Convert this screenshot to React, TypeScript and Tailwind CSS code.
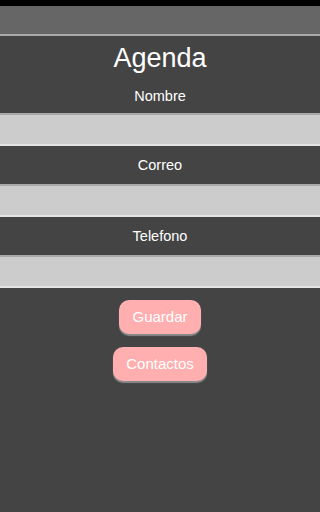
export default function App() {
  const fields = ["Nombre", "Correo", "Telefono"];

  return (
    <div className="min-h-screen bg-[#444444] font-['Liberation_Sans',Arial,sans-serif] text-white">
      <div className="h-[6px] bg-black" />
      <div className="h-[30px] border-b-2 border-[#aaaaaa] bg-[#666666]" />

      <h1 className="mt-[6px] text-center text-[27px] leading-[32px]">Agenda</h1>

      <form className="flex flex-col" onSubmit={(e) => e.preventDefault()}>
        {fields.map((label, i) => (
          <div key={label} className="flex flex-col">
            <label
              className={`text-center text-[14.5px] leading-[20px] ${
                i === 0 ? "mt-[12px] mb-[7px]" : "my-[9px]"
              }`}
            >
              {label}
            </label>
            <input
              type="text"
              className="h-[33px] w-full border-y-2 border-t-[#a8a8a8] border-b-[#e4e4e4] bg-[#cccccc] px-2 text-black outline-none"
            />
          </div>
        ))}

        <div className="mt-[12px] flex flex-col items-center gap-[13px]">
          <button className="rounded-[10px] bg-[#ffafaf] px-[13px] py-2 text-[15px] leading-[18px] text-white shadow-[0_2px_1px_#8a8a8a]">
            Guardar
          </button>
          <button className="rounded-[10px] bg-[#ffafaf] px-[13px] py-2 text-[15px] leading-[18px] text-white shadow-[0_2px_1px_#8a8a8a]">
            Contactos
          </button>
        </div>
      </form>
    </div>
  );
}
